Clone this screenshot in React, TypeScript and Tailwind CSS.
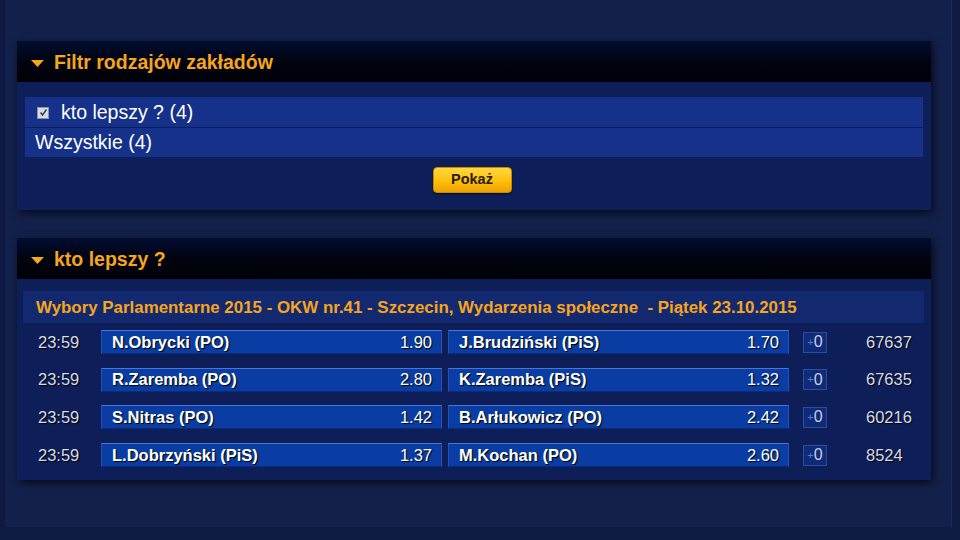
import React from "react";

const rows = [
  { t: "23:59", a: "N.Obrycki (PO)", ao: "1.90", b: "J.Brudziński (PiS)", bo: "1.70", n: "67637" },
  { t: "23:59", a: "R.Zaremba (PO)", ao: "2.80", b: "K.Zaremba (PiS)", bo: "1.32", n: "67635" },
  { t: "23:59", a: "S.Nitras (PO)", ao: "1.42", b: "B.Arłukowicz (PO)", bo: "2.42", n: "60216" },
  { t: "23:59", a: "L.Dobrzyński (PiS)", ao: "1.37", b: "M.Kochan (PO)", bo: "2.60", n: "8524" },
];

function Tri() {
  return (
    <svg width="13" height="7" viewBox="0 0 13 7" className="shrink-0">
      <polygon points="0,0 13,0 6.5,7" fill="#f6a817" />
    </svg>
  );
}

function Header({ title }: { title: string }) {
  return (
    <div className="h-[41px] flex items-center pl-[14px] pt-[3px] gap-[10px] bg-gradient-to-b from-[#020d33] via-[#00040f] to-[#000108]">
      <Tri />
      <span className="text-[19.5px] font-bold text-[#f6a51c]">{title}</span>
    </div>
  );
}

function Box({ name, odd }: { name: string; odd: string }) {
  return (
    <div className="w-[341px] h-[24px] flex items-center justify-between pl-[10px] pr-[9px] bg-[#0a3da3] border-t border-t-[#4c74d4] border-x border-x-[#2450b5] border-b border-b-[#0a2b7a] text-white [text-shadow:1px_1px_1px_#000]">
      <span className="font-bold text-[16.5px]">{name}</span>
      <span className="text-[16.5px]">{odd}</span>
    </div>
  );
}

export default function App() {
  return (
    <div className="w-[960px] h-[540px] bg-[#0f1a42] overflow-hidden" style={{ fontFamily: '"Liberation Sans", Arial, sans-serif' }}>
      <div className="h-[527px] w-[952px] bg-[#13204b] border-l-[5px] border-l-[#0e1843] border-r border-r-[#1a2a5c] pl-[12px] pt-[41px]">
        {/* Panel 1 */}
        <div className="w-[914px] bg-[#0e1e58] shadow-[2px_3px_8px_rgba(0,0,0,0.7)]">
          <Header title="Filtr rodzajów zakładów" />
          <div className="pt-[15px] pl-[8px] pr-[8px] pb-[17px] flex flex-col">
            <div className="h-[31px] bg-[#15318a] flex items-center pl-[12px] pt-[1px] gap-[12px] border-b border-b-[#0b1f5e]">
              <div className="w-[12px] h-[12px] bg-[#d8dbe4] border border-[#8b93a8] flex items-center justify-center">
                <svg width="9" height="9" viewBox="0 0 9 9">
                  <path d="M1.5 4.5 L3.5 7 L7.5 1.5" stroke="#333a55" strokeWidth="1.4" fill="none" />
                </svg>
              </div>
              <span className="text-[19.5px] text-white">kto lepszy ? (4)</span>
            </div>
            <div className="h-[29px] bg-[#15318a] flex items-center pl-[10px] pt-[1px]">
              <span className="text-[19.5px] text-white">Wszystkie (4)</span>
            </div>
            <div className="flex justify-center mt-[10px]">
              <button className="w-[79px] h-[26px] rounded-[4px] bg-gradient-to-b from-[#ffd83a] via-[#ffc20e] to-[#eea200] border border-[#c98a00] text-[14.5px] font-bold text-[#2a1c00] shadow-[0_1px_2px_rgba(0,0,0,0.6)] ml-[-4px]">
                Pokaż
              </button>
            </div>
          </div>
        </div>

        {/* Panel 2 */}
        <div className="w-[914px] mt-[28px] bg-[#0e1e58] shadow-[2px_3px_8px_rgba(0,0,0,0.7)]">
          <Header title="kto lepszy ?" />
          <div className="pt-[12px] pl-[6px] pr-[7px]">
            <div className="h-[32px] bg-[#13296f] flex items-center pl-[13px] pt-[1px]">
              <span className="text-[16.9px] font-bold text-[#f6a51c] whitespace-pre">
                {"Wybory Parlamentarne 2015 - OKW nr.41 - Szczecin, Wydarzenia społeczne  - Piątek 23.10.2015"}
              </span>
            </div>
          </div>
          <div className="pt-[7px] pb-[13px] pl-[21px] flex flex-col gap-[13.7px]">
            {rows.map((r, i) => (
              <div key={i} className="flex items-center h-[24px]">
                <span className="w-[63px] text-[16.5px] text-[#d6dae6] [text-shadow:1px_1px_1px_#000]">{r.t}</span>
                <Box name={r.a} odd={r.ao} />
                <div className="w-[6px]" />
                <Box name={r.b} odd={r.bo} />
                <div className="ml-[14px] w-[24px] h-[21px] border border-[#2c4d9e] bg-[#0f2a78] flex items-center justify-center leading-none">
                  <span className="text-[11px] text-[#4f80d6]">+</span>
                  <span className="text-[16px] text-[#c9d0e2]">0</span>
                </div>
                <span className="ml-[39px] text-[16.5px] text-[#d6dae6] [text-shadow:1px_1px_1px_#000]">{r.n}</span>
              </div>
            ))}
          </div>
        </div>
      </div>
    </div>
  );
}
